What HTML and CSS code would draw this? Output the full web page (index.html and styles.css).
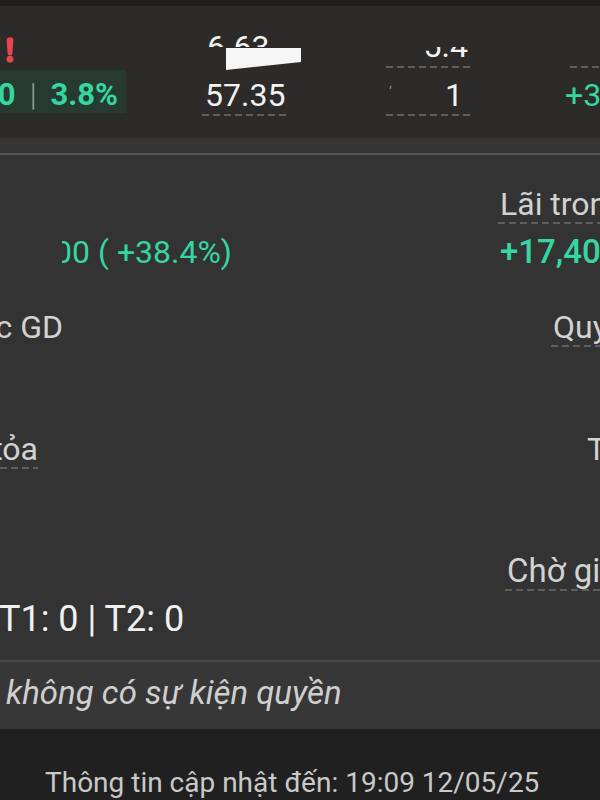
FILE: index.html
```html
<!DOCTYPE html>
<html lang="vi">
<head>
  <meta charset="UTF-8"/>
  <title>Chi tiết mã</title>
  <link rel="stylesheet" href="styles.css">
</head>
<body>

<div class="statusbar"></div>

<section class="ticker">
  <div class="tick">
    <div class="tick-label">
      <svg class="alert" width="12" height="26" viewBox="0 0 12 26">
        <path d="M2.6 3.6a3.4 3.4 0 0 1 6.8 0L8.4 16.2a2.4 2.4 0 0 1-4.8 0z" fill="#e8444f"/>
        <circle cx="6" cy="22.2" r="3.4" fill="#e8444f"/>
      </svg>
    </div>
    <div class="tick-value change">
      <span>+1,100</span><span class="pipe">|</span><span>3.8%</span>
    </div>
  </div>

  <div class="tick tick-price">
    <div class="tick-label">
      <div class="peek-top">6.63</div>
      <div class="redact"></div>
    </div>
    <div class="tick-value dashed">57.35</div>
  </div>

  <div class="tick tick-vol">
    <div class="tick-label dashed">
      <div class="peek-bottom"><span>5.4</span></div>
    </div>
    <div class="tick-value dashed"><span class="speck">&#8216;</span>1</div>
  </div>

  <div class="tick tick-last">
    <div class="tick-label dashed"></div>
    <div class="tick-value up">+38.4%</div>
  </div>
</section>
<div class="ticker-foot"></div>

<section class="stats">
  <div class="row row-a">
    <div></div>
    <div class="cut-right label dashed at-500">Lãi trong ngày</div>
  </div>
  <div class="row row-b">
    <div class="cut-left up pnl">+4,810,000 ( +38.4%)</div>
    <div class="cut-right up strong at-500">+17,400,000</div>
  </div>
  <div class="row row-c">
    <div class="cut-left label w-62">Số lượng được GD</div>
    <div class="cut-right label dashed at-553">Quyền chờ về</div>
  </div>
  <div class="row row-d">
    <div class="cut-left label dashed w-38">Phong tỏa</div>
    <div class="cut-right label at-587">T0</div>
  </div>
  <div class="row row-e">
    <div></div>
    <div class="cut-right label wide dashed at-507">Chờ giao dịch</div>
  </div>
  <div class="row row-f">
    <div class="value">T1: 0 | T2: 0</div>
  </div>
</section>

<div class="events">không có sự kiện quyền</div>

<footer class="updated">Thông tin cập nhật đến: 19:09 12/05/25</footer>

</body>
</html>
```

FILE: styles.css
```css
* { box-sizing: border-box; }
html, body { margin: 0; padding: 0; }
body {
  width: 600px; height: 800px; overflow: hidden;
  background: #333333; color: #f2f2f2;
  font-family: Roboto, 'Noto Sans', sans-serif;
}

.statusbar { height: 6px; background: #1e1e1e; }

/* dashed underline used across the screen */
.dashed {
  background: repeating-linear-gradient(90deg, #5e5e5e 0 7px, transparent 7px 11px) left bottom / 100% 2px no-repeat;
}

.ticker {
  height: 132px; padding-top: 21px; background: #2c2b29;
  display: grid; grid-template-columns: 202px 184px 179px 1fr;
}
.tick { display: flex; flex-direction: column; }
.tick-label { height: 41px; margin-bottom: 2px; }
.tick-value {
  height: 46px; padding-top: 7px; line-height: 36px;
  font-size: 32px; white-space: nowrap;
}

.alert { display: block; margin: 10px 0 0 4px; }
.change {
  width: 126px; height: 43px; padding-right: 8px;
  background: #263a31; color: #35d6a0;
  font-size: 31px; font-weight: 700;
  display: flex; justify-content: flex-end; overflow: hidden;
}
.change .pipe { color: #9a9a9a; font-weight: 300; margin: 0 14px; }

.tick-price .tick-label, .tick-price .tick-value { width: 84px; }
.tick-price .tick-value { padding-left: 3px; }
.peek-top {
  margin-top: 6px; height: 14px; overflow: hidden;
  font-size: 32px; line-height: 28px; padding-left: 5px; color: #f4f4f4;
}
.redact {
  width: 75px; height: 22px; margin: 1px 0 0 24px; background: #f6f6f6;
  clip-path: polygon(0 0, 100% 0, 100% 64%, 0 100%);
}

.tick-vol .tick-label, .tick-vol .tick-value { width: 84px; }
.tick-vol .tick-value { text-align: right; padding-right: 7px; position: relative; }
.peek-bottom {
  margin-top: 20px; height: 11px; padding-right: 2px; overflow: hidden;
  display: flex; justify-content: flex-end; align-items: flex-end;
  font-size: 32px; line-height: 24px;
}
.speck { position: absolute; left: 3px; top: 4px; font-size: 14px; color: #8a8a8a; }

.tick-last .tick-label { margin-left: 5px; }
.up { color: #35d6a0; }

.ticker-foot { height: 17px; background: #353535; border-bottom: 2px solid #575757; }

.stats { padding-top: 31px; }
.row { display: flex; justify-content: space-between; }
.row > div { height: 38px; line-height: 36px; white-space: nowrap; overflow: hidden; }
.label { font-size: 32px; color: #d2d2d2; }
.label.wide { font-size: 33px; }
.value { font-size: 36px; color: #f0f0f0; }
.strong { font-size: 33px; font-weight: 500; }

.cut-left { display: flex; justify-content: flex-end; }
.cut-right { flex: none; padding-left: 2px; }
.pnl { width: 170px; margin-left: 62px; font-size: 32px; }
.w-62 { width: 63px; }
.w-38 { width: 38px; }
.at-500 { width: 102px; }
.at-553 { width: 49px; }
.at-587 { width: 15px; }
.at-507 { width: 95px; }

.row-b { margin-top: 10px; }
.row-c { margin-top: 37px; }
.row-d { margin-top: 84px; }
.row-e { margin-top: 84px; }
.row-f { margin-top: 10px; }
.row-f .value { margin-left: -1px; }

.events {
  margin-top: 21px; height: 69px; padding: 13px 0 0 6px;
  border-top: 2px solid #474747; background: #373737;
  font-size: 33px; line-height: 36px; font-style: italic; color: #cfcfcf;
  white-space: nowrap;
}

.updated {
  height: 71px; padding: 37px 0 0 45px; background: #202020;
  font-size: 28px; line-height: 34px; color: #c9c9c9; white-space: nowrap;
}
```
